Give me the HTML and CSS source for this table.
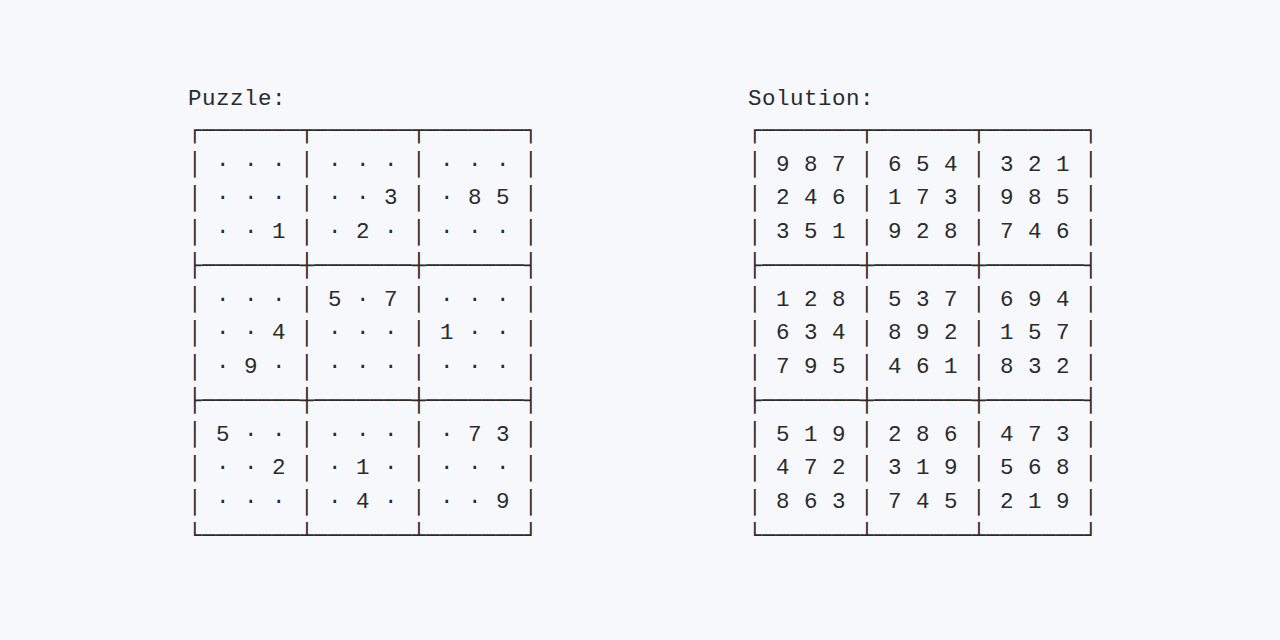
FILE: index.html
```html
<!DOCTYPE html>
<html lang="en">
<head>
<meta charset="utf-8">
<title>Sudoku</title>
<link rel="stylesheet" href="styles.css">
</head>
<body>
<main class="boards">
<section class="panel">
<div class="title">Puzzle:</div>
<pre class="board"><span class="b">┌───────┬───────┬───────┐</span>
<span class="b">│</span> · · · <span class="b">│</span> · · · <span class="b">│</span> · · · <span class="b">│</span>
<span class="b">│</span> · · · <span class="b">│</span> · · 3 <span class="b">│</span> · 8 5 <span class="b">│</span>
<span class="b">│</span> · · 1 <span class="b">│</span> · 2 · <span class="b">│</span> · · · <span class="b">│</span>
<span class="b">├───────┼───────┼───────┤</span>
<span class="b">│</span> · · · <span class="b">│</span> 5 · 7 <span class="b">│</span> · · · <span class="b">│</span>
<span class="b">│</span> · · 4 <span class="b">│</span> · · · <span class="b">│</span> 1 · · <span class="b">│</span>
<span class="b">│</span> · 9 · <span class="b">│</span> · · · <span class="b">│</span> · · · <span class="b">│</span>
<span class="b">├───────┼───────┼───────┤</span>
<span class="b">│</span> 5 · · <span class="b">│</span> · · · <span class="b">│</span> · 7 3 <span class="b">│</span>
<span class="b">│</span> · · 2 <span class="b">│</span> · 1 · <span class="b">│</span> · · · <span class="b">│</span>
<span class="b">│</span> · · · <span class="b">│</span> · 4 · <span class="b">│</span> · · 9 <span class="b">│</span>
<span class="b">└───────┴───────┴───────┘</span></pre>
</section>
<section class="panel">
<div class="title">Solution:</div>
<pre class="board"><span class="b">┌───────┬───────┬───────┐</span>
<span class="b">│</span> 9 8 7 <span class="b">│</span> 6 5 4 <span class="b">│</span> 3 2 1 <span class="b">│</span>
<span class="b">│</span> 2 4 6 <span class="b">│</span> 1 7 3 <span class="b">│</span> 9 8 5 <span class="b">│</span>
<span class="b">│</span> 3 5 1 <span class="b">│</span> 9 2 8 <span class="b">│</span> 7 4 6 <span class="b">│</span>
<span class="b">├───────┼───────┼───────┤</span>
<span class="b">│</span> 1 2 8 <span class="b">│</span> 5 3 7 <span class="b">│</span> 6 9 4 <span class="b">│</span>
<span class="b">│</span> 6 3 4 <span class="b">│</span> 8 9 2 <span class="b">│</span> 1 5 7 <span class="b">│</span>
<span class="b">│</span> 7 9 5 <span class="b">│</span> 4 6 1 <span class="b">│</span> 8 3 2 <span class="b">│</span>
<span class="b">├───────┼───────┼───────┤</span>
<span class="b">│</span> 5 1 9 <span class="b">│</span> 2 8 6 <span class="b">│</span> 4 7 3 <span class="b">│</span>
<span class="b">│</span> 4 7 2 <span class="b">│</span> 3 1 9 <span class="b">│</span> 5 6 8 <span class="b">│</span>
<span class="b">│</span> 8 6 3 <span class="b">│</span> 7 4 5 <span class="b">│</span> 2 1 9 <span class="b">│</span>
<span class="b">└───────┴───────┴───────┘</span></pre>
</section>
</main>
</body>
</html>
```
FILE: styles.css
```css
html, body {
  margin: 0;
  padding: 0;
  background: #f6f8fb;
}

.boards {
  display: flex;
  justify-content: flex-start;
  gap: 210px;
  padding: 83px 0 0 188px;
}

.panel {
  display: flex;
  flex-direction: column;
  font-family: "Liberation Mono", monospace;
  font-size: 22.5px;
  letter-spacing: 0.5px;
  color: #2b2b2b;
}

.title {
  line-height: 33.75px;
  white-space: pre;
  margin-bottom: -2px;
}

.board {
  margin: 0;
  font: inherit;
  line-height: 33.75px;
  white-space: pre;
}

.b {
  display: inline-block;
  font-family: "DejaVu Sans Mono", monospace;
  letter-spacing: 0.45px;
  line-height: 27px;
  height: 27px;
  overflow: hidden;
  vertical-align: middle;
}
```
